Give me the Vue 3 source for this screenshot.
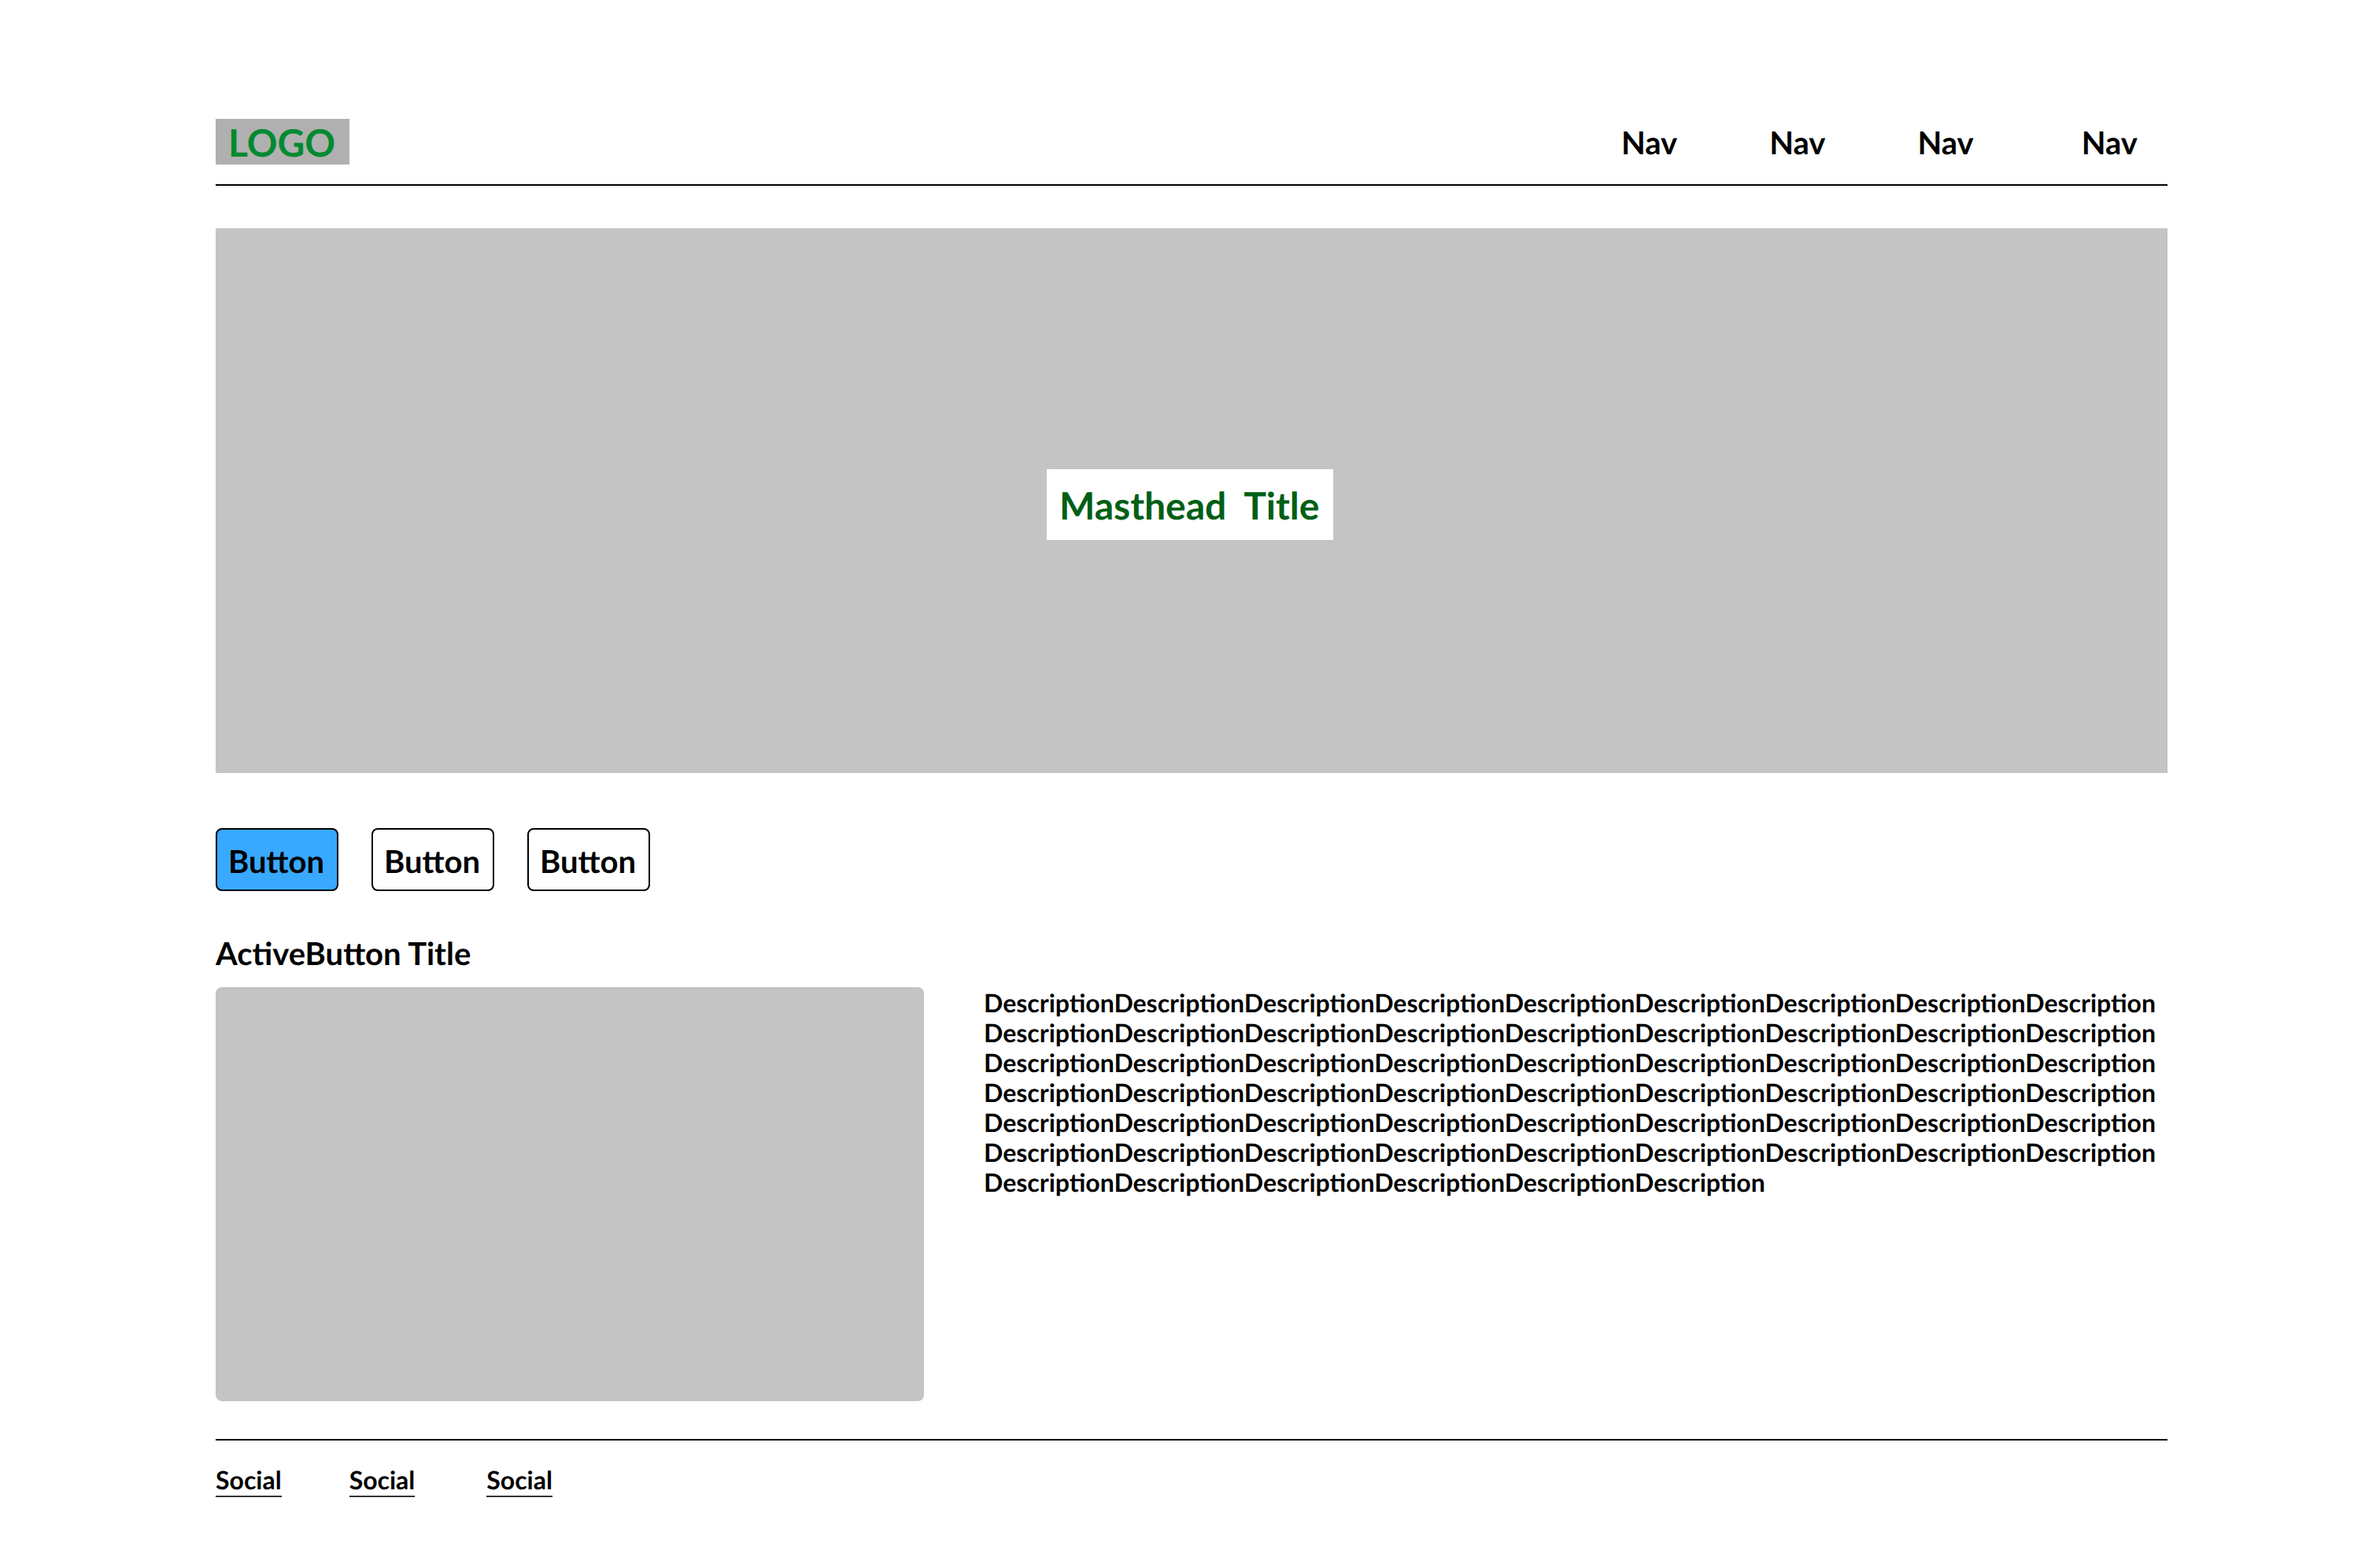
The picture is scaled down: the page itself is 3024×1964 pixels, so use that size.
<template>
  <div class="page">
    <header class="topbar">
      <div class="logo">LOGO</div>
      <nav class="nav">
        <a v-for="(item, i) in navItems" :key="i" class="nav-link">{{ item }}</a>
      </nav>
    </header>

    <section class="masthead">
      <h1 class="masthead-title">Masthead&nbsp; Title</h1>
    </section>

    <div class="buttons">
      <button
        v-for="(label, i) in buttons"
        :key="i"
        :class="['btn', { active: i === activeIndex }]"
        @click="activeIndex = i"
      >{{ label }}</button>
    </div>

    <h2 class="active-title">ActiveButton Title</h2>
    <div class="content">
      <div class="picture"></div>
      <p class="description">{{ description }}</p>
    </div>

    <footer class="footer">
      <a v-for="(item, i) in socials" :key="i" class="social">{{ item }}</a>
    </footer>
  </div>
</template>

<script setup>
import { ref } from 'vue'

const navItems = ['Nav', 'Nav', 'Nav', 'Nav']
const buttons = ['Button', 'Button', 'Button']
const socials = ['Social', 'Social', 'Social']
const activeIndex = ref(0)

const description = Array.from({ length: 60 }, () => 'Description')
  .map((word, i) => ((i + 1) % 9 === 0 ? word + ' ' : word))
  .join('')
</script>

<style>
html,
body {
  margin: 0;
  background: #fff;
}
</style>

<style scoped>
.page {
  width: 2480px;
  margin-left: 274px;
  padding-top: 151px;
  font-family: Lato, "Liberation Sans", sans-serif;
  font-weight: 700;
  color: #000;
  text-rendering: geometricPrecision;
}

.topbar {
  display: flex;
  justify-content: space-between;
  align-items: flex-start;
  height: 83px;
  border-bottom: 2px solid #000;
}

.logo {
  width: 154px;
  height: 58px;
  padding-left: 16px;
  line-height: 62px;
  background: #b0b0b0;
  color: #008a30;
  font-size: 48px;
}

.nav {
  display: flex;
  height: 60px;
  align-items: center;
  padding-right: 38px;
}

.nav-link {
  font-size: 40px;
  margin-left: 117px;
}

.nav-link:last-child {
  margin-left: 137px;
}

.masthead {
  margin-top: 54px;
  height: 692px;
  background: #c4c4c4;
  display: flex;
  justify-content: center;
  align-items: center;
}

.masthead-title {
  margin: 10px 4px 0 0;
  width: 348px;
  height: 90px;
  padding-left: 16px;
  line-height: 93px;
  background: #fff;
  color: #005f15;
  font-size: 48px;
}

.buttons {
  display: flex;
  gap: 42px;
  margin-top: 70px;
}

.btn {
  width: 156px;
  height: 80px;
  padding: 3px 0 0 14px;
  text-align: left;
  background: #fff;
  border: 2px solid #000;
  border-radius: 8px;
  color: #000;
  font-family: inherit;
  font-weight: 700;
  font-size: 40px;
  text-rendering: geometricPrecision;
  cursor: pointer;
}

.btn.active {
  background: #38a9ff;
}

.active-title {
  margin: 55px 0 0;
  font-size: 40px;
  line-height: 48px;
  height: 67px;
}

.content {
  display: flex;
  align-items: flex-start;
  height: 526px;
}

.picture {
  width: 900px;
  height: 526px;
  background: #c4c4c4;
  border-radius: 8px;
  flex-shrink: 0;
}

.description {
  margin: 1px 0 0 76px;
  width: 1500px;
  font-size: 32px;
  line-height: 38px;
  word-break: break-word;
}

.footer {
  display: flex;
  margin-top: 48px;
  padding-top: 30px;
  border-top: 2px solid #000;
}

.social {
  font-size: 32px;
  line-height: 40px;
  border-bottom: 2px solid #333;
  margin-right: 86px;
}

.social:nth-child(2) {
  margin-right: 91px;
}
</style>
